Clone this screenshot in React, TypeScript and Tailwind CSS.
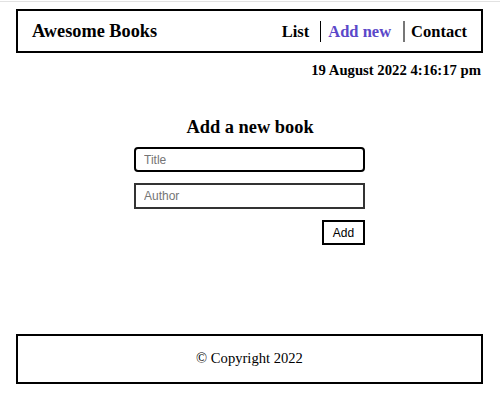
export default function App() {
  return (
    <div className="flex h-[400px] flex-col bg-white font-['Liberation_Serif','Times_New_Roman',serif] text-black">
      <div className="mt-px h-px bg-[#e2e2e2]" />

      <header className="ml-4 mr-[17px] mt-[7px] flex h-[44px] items-center justify-between border-2 border-black pl-[14px] pr-[14px]">
        <h1 className="text-[18.3px] font-bold leading-[22px]">Awesome Books</h1>
        <ul className="flex items-center text-[16.5px] font-bold leading-[21px]">
          <li>List</li>
          <li className="ml-[11px] border-l border-black pl-[7px] text-[#5b48c9]">Add new</li>
          <li className="ml-[12px] border-l-2 border-[#777] pl-[6px]">Contact</li>
        </ul>
      </header>

      <p className="mt-[7px] pr-[19px] text-right text-[14.7px] font-bold leading-[20px]">
        19 August 2022 4:16:17 pm
      </p>

      <h2 className="mt-[35px] text-center text-[18.4px] font-bold leading-[24px]">Add a new book</h2>

      <form className="ml-[134px] mt-[8px] flex w-[231px] flex-col" onSubmit={(e) => e.preventDefault()}>
        <input
          placeholder="Title"
          className="h-[25px] rounded-[4px] border-2 border-black px-[8px] font-['Liberation_Sans',Arial,sans-serif] text-[12px] outline-none placeholder:text-[#757575]"
        />
        <input
          placeholder="Author"
          className="mt-[11px] h-[26px] border-2 border-[#333] px-[8px] font-['Liberation_Sans',Arial,sans-serif] text-[12px] outline-none placeholder:text-[#757575]"
        />
        <button
          type="submit"
          className="mt-[11px] h-[25px] w-[43px] self-end border-2 border-black bg-white font-['Liberation_Sans',Arial,sans-serif] text-[12px]"
        >
          Add
        </button>
      </form>

      <footer className="mb-4 ml-4 mr-[17px] mt-auto flex h-[50px] items-center justify-center border-2 border-black">
        <p className="text-[14.6px]">© Copyright 2022</p>
      </footer>
    </div>
  );
}
